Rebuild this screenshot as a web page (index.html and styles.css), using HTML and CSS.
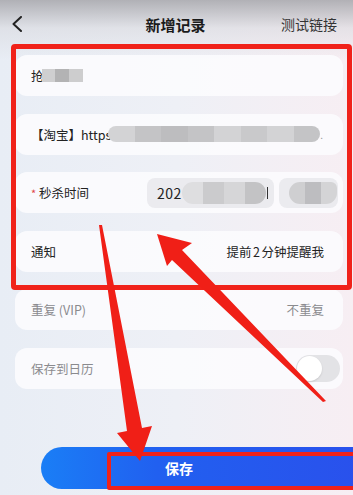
FILE: index.html
```html
<!DOCTYPE html>
<html lang="zh">
<head>
<meta charset="utf-8">
<link rel="stylesheet" href="styles.css">
</head>
<body>
<div class="page">
  <header class="nav">
    <svg class="back" width="12" height="16" viewBox="0 0 12 16"><path d="M10 1 L2.5 8 L10 15" fill="none" stroke="#222" stroke-width="2" stroke-linecap="round" stroke-linejoin="round"/></svg>
    <h1 class="title">新增记录</h1>
    <span class="link">测试链接</span>
  </header>

  <main class="list">
    <div class="card"><span class="txt">抢</span><span class="mosaic m1"><i></i><i></i><i></i></span></div>
    <div class="card"><span class="txt">【淘宝】https</span><span class="mosaic m2"><i></i><i></i><i></i><i></i><i></i><i></i><i></i><i></i></span><span class="dot">.</span></div>
    <div class="card card-time">
      <span class="txt"><b class="req">*</b> 秒杀时间</span>
      <div class="pills">
        <div class="pill pill-date"><span class="yr">202</span><span class="mosaic m3"><i></i><i></i><i></i><i></i></span><span class="edge"></span></div>
        <div class="pill pill-clock"><span class="mosaic m4"><i></i><i></i><i></i></span></div>
      </div>
    </div>
    <div class="card"><span class="txt">通知</span><span class="val">提前<span class="num">2</span>分钟提醒我</span></div>
    <div class="card dim"><span class="txt">重复 (VIP)</span><span class="val">不重复</span></div>
    <div class="card dim card-cal"><span class="txt">保存到日历</span><span class="toggle"><span class="knob"></span></span></div>
  </main>

  <div class="footer">
    <button class="save">保存</button>
  </div>

  <div class="mark mark-list"></div>
  <div class="mark mark-btn"></div>
  <svg class="arrows" width="353" height="495" viewBox="0 0 353 495">
    <polygon points="99,225 102,225 142,428 152,426 140,461 117,433 127,431" fill="#f01f17"/>
    <polygon points="323,402 326,401 182,250 192,243 157,234 167,266 172,260" fill="#f01f17"/>
  </svg>
</div>
</body>
</html>
```

FILE: styles.css
```css
* { box-sizing: border-box; margin: 0; padding: 0; }
html, body { width: 353px; height: 495px; overflow: hidden; }
body {
  font-family: "Noto Sans CJK SC", "Noto Sans", sans-serif;
  color: #222;
  background:
    linear-gradient(180deg, rgba(170,170,175,0.9) 0, rgba(215,215,220,0.55) 28px, rgba(236,236,242,0) 60px),
    linear-gradient(90deg, #e8edf5 0%, #eef0f6 50%, #f7eef3 100%);
}
.page { position: relative; width: 353px; height: 495px; overflow: hidden; }

.nav {
  height: 45px;
  display: grid;
  grid-template-columns: 1fr auto 1fr;
  align-items: center;
  padding: 0 16px 0 11px;
  padding-top: 3px;
}
.back { display: block; }
.title { font-size: 15px; font-weight: 700; color: #1a1a1a; padding-left: 3px; }
.link { justify-self: end; font-size: 14px; color: #333; }

.list {
  display: flex;
  flex-direction: column;
  gap: 17.5px;
  padding: 10px 10px 0 15px;
}
.card {
  height: 41px;
  border-radius: 12px;
  background: rgba(252,252,254,0.88);
  display: flex;
  align-items: center;
  padding: 0 19px 0 16px;
  font-size: 12.5px;
}
.txt { white-space: nowrap; }
.val { margin-left: auto; white-space: nowrap; }
.num { margin: 0 1.5px; }
.dim { color: #8a8a8e; }
.req { color: #e0454a; font-weight: 400; font-size: 11px; }

.mosaic { display: flex; filter: blur(0.6px); overflow: hidden; }
.mosaic i { display: block; flex: 1; height: 100%; }
.m1 { width: 41px; height: 13px; margin-left: -2px; }
.m1 i:nth-child(1) { background: #cfcfd0; }
.m1 i:nth-child(2) { background: #b3b3b4; }
.m1 i:nth-child(3) { background: #cdcdce; }
.m2 { width: 212px; height: 16px; border-radius: 8px; margin-left: -3px; }
.m2 i:nth-child(odd) { background: #d3d3d5; }
.m2 i:nth-child(even) { background: #c4c4c6; }
.m2 i:nth-child(3) { background: #bdbdbf; }
.m2 i:nth-child(6) { background: #c9c9cb; }
.dot { color: #999; font-size: 10px; }

.card-time { padding-right: 5px; }
.pills { margin-left: auto; display: flex; gap: 5px; }
.pill {
  height: 30px;
  border-radius: 8px;
  background: #ebebef;
  display: flex;
  align-items: center;
}
.pill-date { width: 127px; padding-left: 10px; font-size: 14px; }
.yr { letter-spacing: 0.5px; }
.m3 { width: 84px; height: 22px; border-radius: 11px; margin-left: 0; }
.m3 i:nth-child(1) { background: #dedee0; }
.m3 i:nth-child(2) { background: #cbcbcd; }
.m3 i:nth-child(3) { background: #d6d6d8; }
.m3 i:nth-child(4) { background: #c3c3c5; }
.edge { width: 1.5px; height: 12px; background: #333; margin-left: 1px; }
.pill-clock { width: 59px; padding-left: 10px; }
.m4 { width: 48px; height: 22px; border-radius: 11px 6px 11px 11px; }
.m4 i:nth-child(1) { background: #cfcfd1; }
.m4 i:nth-child(2) { background: #bdbdc0; }
.m4 i:nth-child(3) { background: #d4d4d6; }

.card-cal { padding-right: 3px; }
.toggle {
  margin-left: auto;
  width: 44px;
  height: 27px;
  border-radius: 14px;
  background: #e3e3e6;
  display: flex;
  align-items: center;
  padding: 1px;
}
.knob {
  width: 25px;
  height: 25px;
  border-radius: 50%;
  background: #fff;
  box-shadow: 0 1px 2px rgba(0,0,0,0.12);
}

.footer { padding: 58.5px 0 0 41px; }
.save {
  display: flex;
  align-items: center;
  width: 330px;
  height: 42px;
  border: none;
  border-radius: 21px 0 0 21px;
  background: linear-gradient(90deg, #1a7ef6 0%, #2160f0 35%, #2a50ec 100%);
  color: #fff;
  font-family: "Noto Sans CJK SC", sans-serif;
  font-size: 14px;
  font-weight: 700;
  padding-left: 124px;
}

.mark { position: absolute; border: 5px solid #f0221a; pointer-events: none; }
.mark-list { left: 11px; top: 44px; width: 341px; height: 246px; border-radius: 4px; }
.mark-btn { left: 107px; top: 452px; width: 252px; height: 38px; border-width: 4px; border-radius: 2px; }
.arrows { position: absolute; left: 0; top: 0; pointer-events: none; }
```
